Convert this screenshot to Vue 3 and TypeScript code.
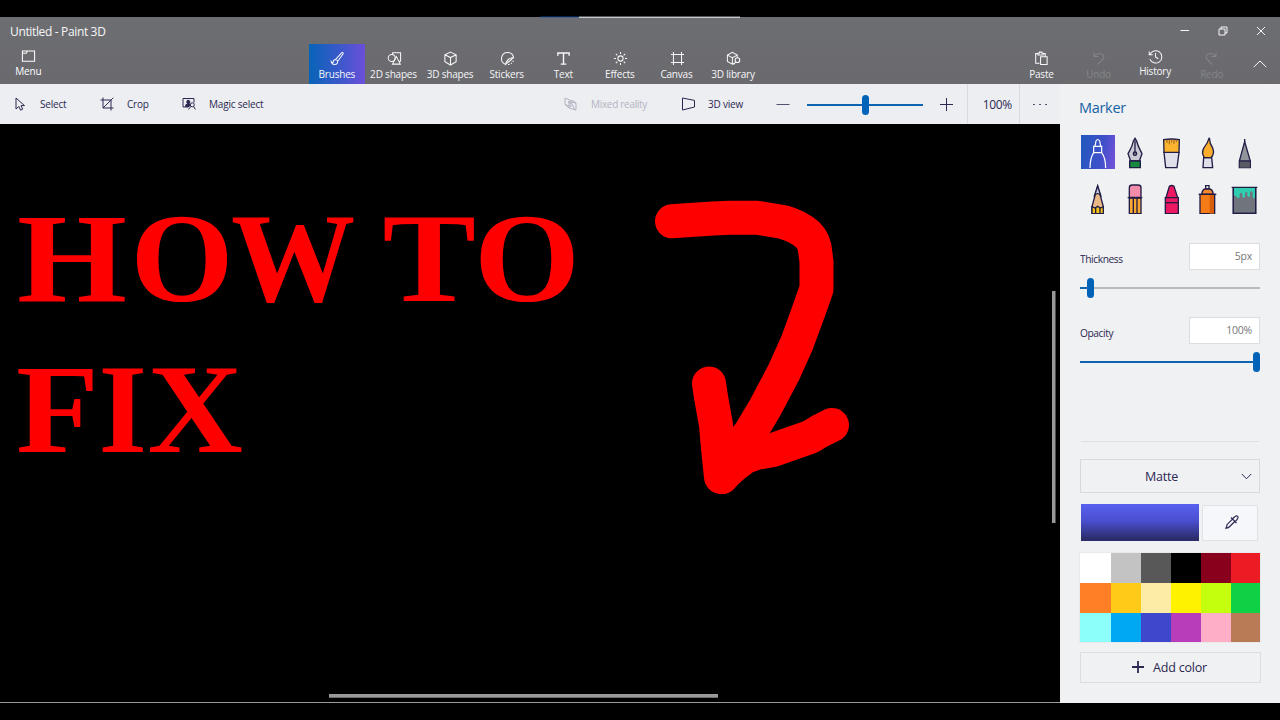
<script setup lang="ts">
interface Tab { id: string; label: string; active?: boolean }

const tabs: Tab[] = [
  { id: 'brushes', label: 'Brushes', active: true },
  { id: 'shapes2d', label: '2D shapes' },
  { id: 'shapes3d', label: '3D shapes' },
  { id: 'stickers', label: 'Stickers' },
  { id: 'text', label: 'Text' },
  { id: 'effects', label: 'Effects' },
  { id: 'canvas', label: 'Canvas' },
  { id: 'library', label: '3D library' },
]

const brushes: string[] = ['marker', 'pen', 'oil', 'water', 'pixel', 'pencil', 'eraser', 'crayon', 'spray', 'fill']

const palette: string[] = [
  '#ffffff', '#c3c3c3', '#585858', '#000000', '#88001b', '#ec1c24',
  '#ff7f27', '#ffca18', '#fdeca6', '#fff200', '#c4ff0e', '#0ed145',
  '#8cfffb', '#00a8f3', '#3f48cc', '#b83dba', '#ffaec8', '#b97a56',
]
</script>

<template>
  <div class="screen">
    <header class="header">
      <div class="progress"><i></i><b></b></div>
      <div class="titlebar">
        <span class="title">Untitled - Paint 3D</span>
        <div class="winbtns">
          <svg viewBox="0 0 10 10"><path d="M0.5 4.5H9" /></svg>
          <svg viewBox="0 0 10 10"><path d="M1 3H7V9H1ZM3 3V1H9V7H7" /></svg>
          <svg viewBox="0 0 10 10"><path d="M1 1L9 9M9 1L1 9" /></svg>
        </div>
      </div>
      <div class="ribbon">
        <div class="rib menu raised">
          <svg viewBox="0 0 16 16"><path d="M1.5 2.2H14.5V13H1.5ZM1.5 4.5H5.6L7 2.2" /></svg>
          <span>Menu</span>
        </div>
        <nav class="tabs">
          <div v-for="t in tabs" :key="t.id" class="rib" :class="{ active: t.active }">
            <svg viewBox="0 0 16 16">
              <path v-if="t.id === 'brushes'" d="M6 9L12.6 1.8Q14.4 1 14 3L8.2 11M6 9Q3.3 9.2 3.3 12Q3 13.2 1.3 11.2Q1.8 14.5 5 14.5Q8.4 14.2 8.2 11Q7.8 9.2 6 9" />
              <g v-else-if="t.id === 'shapes2d'">
                <path d="M6 4.2V1.8H14.5V11H12.6M10 6L14.2 14H5.8Z" /><circle cx="5" cy="7.5" r="3.7" />
              </g>
              <path v-else-if="t.id === 'shapes3d'" d="M8 1.2L14 4V11.5L8 15L2 11.5V4ZM2 4L8 7L14 4M8 7V15" />
              <g v-else-if="t.id === 'stickers'">
                <path d="M6 14.3A6.5 6.5 0 1 1 14.5 7Q7.5 7.5 6 14.3L14.5 7" /><path stroke-dasharray="1.5 1.5" d="M8.5 14.5Q14 13.5 14.5 9M9 12L12.5 9" />
              </g>
              <path v-else-if="t.id === 'text'" stroke-width="1.5" d="M2 5V2.2H14V5M8 2.2V14M5 14H11" />
              <g v-else-if="t.id === 'effects'">
                <circle cx="8" cy="8" r="2.8" /><path d="M8 1V3.2M8 12.8V15M1 8H3.2M12.8 8H15M3 3L4.6 4.6M11.4 11.4L13 13M13 3L11.4 4.6M4.6 11.4L3 13" />
              </g>
              <path v-else-if="t.id === 'canvas'" d="M3.7 1V15M12.3 1V15M1 3.7H15M1 12.3H15" />
              <g v-else>
                <path d="M9 13L6.7 14L1.5 11.2V4.4L6.8 1.5L12 4.4V7M1.5 4.4L6.8 7.2L12 4.4M6.8 7.2V14" /><circle cx="12.2" cy="9.8" r="2.5" /><path d="M10.4 11.6L8 14.5" />
              </g>
            </svg>
            <span>{{ t.label }}</span>
          </div>
        </nav>
        <div class="actions">
          <div class="rib paste">
            <svg viewBox="0 0 16 16"><path d="M6 13H1.8V2.8H4.2M9.8 2.8H12V5.5M4.2 4.3V2.4H5.8V1.2H8.4V2.4H9.8V4.3ZM7 6.2H14V14.5H7Z" /></svg>
            <span>Paste</span>
          </div>
          <div class="rib off">
            <svg viewBox="0 0 16 16"><path d="M3.2 1.5V5.8H8M3.5 5.5Q7.5 1.2 12 3.4Q15 6 12.6 9L7 14.5" /></svg>
            <span>Undo</span>
          </div>
          <div class="rib raised history">
            <svg viewBox="0 0 16 16"><path d="M1.3 2.6V6.2H5M2 6A6.6 6.6 0 1 1 2 10.8M8 4.2V8.4L11 10.4" /></svg>
            <span>History</span>
          </div>
          <div class="rib off">
            <svg viewBox="0 0 16 16"><path d="M12.8 1.5V5.8H8M12.5 5.5Q8.5 1.2 4 3.4Q1 6 3.4 9L9 14.5" /></svg>
            <span>Redo</span>
          </div>
          <svg class="up" viewBox="0 0 14 8"><path d="M0.8 7L7 1L13.2 7" /></svg>
        </div>
      </div>
    </header>

    <main class="main">
      <section class="work">
        <div class="toolbar">
          <svg class="i-cursor" viewBox="0 0 12 14"><path d="M1 1V12L3.8 9.4L5.5 13.2L7.7 12.2L6 8.6H9.5Z" /></svg>
          <span>Select</span>
          <svg class="i-crop" viewBox="0 0 14 14"><path d="M0.5 3H11V13.5M3 0.5V11H13.5M3 11L13.3 0.8" /></svg>
          <span>Crop</span>
          <svg viewBox="0 0 14 14"><path d="M6.5 10H1V1.5H12V5.5" /><path class="solid" d="M3 9.5Q3.3 6.7 5.2 6.6A2 2 0 1 1 7.6 6.4L8.8 8L7 10H3Z" /><circle cx="10.3" cy="7.8" r="2" /><path d="M8.9 9.4L6.4 12.5M11.6 9.4L13.4 12.4" /></svg>
          <span>Magic select</span>
          <svg class="dim" viewBox="0 0 14 14"><path d="M1 1L7 3.6V9.5L1 7.5ZM4 4.5L12 6V13L5 11V4.7M7 3.6Q10.5 3.5 12 6M1 7.5L5 11M4.5 6Q8 5 9 9T12 13" /></svg>
          <span class="dim mixed">Mixed reality</span>
          <svg viewBox="0 0 14 14"><path d="M0.5 1V13L12.5 10V3.4Z" /></svg>
          <span class="view">3D view</span>
          <svg class="thinline" viewBox="0 0 14 14"><path d="M0.5 7.5H13.5" /></svg>
          <div class="slider zoomer"><i class="track" /><b class="thumb" /></div>
          <svg viewBox="0 0 14 14"><path d="M0 7.5H13M6.5 1V14" /></svg>
          <span class="pct">100%</span>
          <span class="more"><i /><i /><i /></span>
        </div>
        <svg class="canvas" viewBox="0 124 1060 578">
          <text class="big" y="301"><tspan x="17" textLength="110" lengthAdjust="spacingAndGlyphs">H</tspan><tspan x="130.5" textLength="103" lengthAdjust="spacingAndGlyphs">O</tspan><tspan x="231" textLength="122" lengthAdjust="spacingAndGlyphs">W</tspan> <tspan x="382.5" textLength="93.5" lengthAdjust="spacingAndGlyphs">T</tspan><tspan x="474" textLength="106" lengthAdjust="spacingAndGlyphs">O</tspan></text>
          <text class="big" y="452"><tspan x="16" textLength="83" lengthAdjust="spacingAndGlyphs">F</tspan><tspan x="98.6" textLength="48.5" lengthAdjust="spacingAndGlyphs">I</tspan><tspan x="147.5" textLength="95.5" lengthAdjust="spacingAndGlyphs">X</tspan></text>
          <g class="arrow">
            <path d="M672 221.3L690 220L713 218.5L730 217.8H757L768 219.5L783 222Q798 226 808 235Q815 242 815.5 254L816.5 262V289L808 313L797 343L784 372L765 408L750 433L738 449L722 477" />
            <path d="M709 383.5L711 397L716 425L718 448L721 477L733 466L745 457L756 453L773 450L790 444L810 437L820 431L832 425" />
          </g>
          <rect class="bar" x="1052" y="291" width="3.5" height="232" />
          <rect class="bar" x="329" y="694" width="389" height="3.7" />
        </svg>
      </section>

      <aside class="panel">
        <h2>Marker</h2>
        <div class="brushes">
          <div v-for="b in brushes" :key="b" class="tile" :class="{ on: b === 'marker' }">
            <svg viewBox="0 0 100 100">
              <g v-if="b === 'marker'" class="white">
                <path d="M42 34L45 18Q50 9 56 18L59 34M38 34H62V53H38ZM27 99C27 76 32 62 38 53H62C69 62 74 76 74 99" />
              </g>
              <g v-else-if="b === 'pen'">
                <path fill="#c8c9d3" d="M46 18L51 10L56 18C60 36 67 45 72 56L64 78H38L30 56C36 45 43 36 46 18Z" /><path d="M51 16V51" /><circle fill="#777986" cx="51" cy="56" r="5" /><path fill="#158b3d" d="M35 78H67V98H35Z" />
              </g>
              <g v-else-if="b === 'oil'">
                <path fill="#dfe0ea" d="M27 52H72L66 98H32Z" /><path fill="#fbb42d" d="M26 14Q49 10 73 14L72 52H27Z" /><path class="thin" d="M36 14V24M43 14V28M50 14V23M57 14V27M64 14V22" />
              </g>
              <g v-else-if="b === 'water'">
                <path fill="#dfe0ea" d="M38 68H62L65 98H36Z" /><path fill="#f9ad2b" d="M55 8Q56 26 65 39Q72 56 60 68H40Q30 53 39 38Q50 25 55 8Z" />
              </g>
              <g v-else-if="b === 'pixel'">
                <path fill="#92949b" d="M50 20L34 78V98H67V78Z" /><path class="no" fill="#585b64" d="M35 80H66V98H35Z" /><path d="M50 12V22M34 78H67" />
              </g>
              <g v-else-if="b === 'pencil'">
                <path fill="#eab887" d="M50 15L33 77V98H67V77Z" /><path fill="#c8c8dc" d="M50 15L41 42Q50 34 59 42Z" /><path fill="#fac31b" d="M33 77L42 81L50 76L58 81L67 77V98H33Z" /><path d="M44 81V98M57 81V98" />
              </g>
              <g v-else-if="b === 'eraser'">
                <path fill="#f18caa" d="M34 49V20Q34 12 43 12H60Q69 12 69 20V49Z" /><path fill="#f8a82e" d="M34 51H69V98H34Z" /><path d="M46 51V98M57 51V98M29 50H73" />
              </g>
              <g v-else-if="b === 'crayon'">
                <path fill="#ec1962" d="M43 16Q50 11 57 16L68 50H33Z" /><path fill="#ec1962" d="M31 50H70V98H31Z" /><path d="M31 65H70" />
              </g>
              <g v-else-if="b === 'spray'">
                <path fill="#fff" d="M44 14H54V24H44Z" /><path fill="#f7892b" d="M32 40Q34 24 44 24H54Q65 24 67 40Z" /><path fill="#f47b16" d="M27 40H71V98H27Z" /><path class="no" fill="#d75f0c" d="M56 42H69V98H56Z" /><path d="M23 40H76" />
              </g>
              <g v-else>
                <path fill="#70747d" d="M16 20H83V97H16Z" /><path class="no" fill="#2fceb1" d="M18 21H81V50Q77 56 74 48V34Q70 27 66 34V46Q61 51 58 44V35Q54 28 51 39V48Q46 54 43 46V39Q38 32 35 39V49Q29 55 27 48L18 43Z" /><path d="M11 19H88M16 19V97H83V19" />
              </g>
            </svg>
          </div>
        </div>
        <div class="field"><label>Thickness</label><output>5px</output></div>
        <div class="slider thick"><i class="track" /><b class="thumb" /></div>
        <div class="field second"><label>Opacity</label><output>100%</output></div>
        <div class="slider opac"><i class="track" /><b class="thumb" /></div>
        <div class="material">
          <span>Matte</span>
          <svg viewBox="0 0 11 7"><path d="M0.8 1L5.5 5.8L10.2 1" /></svg>
        </div>
        <div class="current">
          <div class="swatch"></div>
          <div class="picker">
            <svg viewBox="0 0 14 14"><path d="M7.5 3.8L10.4 1.2Q12.6 0.4 13 2Q13.5 3 11 5.8L10.2 6.5M6 2.5L11.5 8M7.5 4.2L2 9.7Q2 12 0.8 13.2Q3.2 13 4.2 12L9.8 6.5" /></svg>
          </div>
        </div>
        <div class="palette">
          <i v-for="c in palette" :key="c" :style="{ background: c }" />
        </div>
        <div class="add">
          <svg viewBox="0 0 12 12"><path d="M0 6H12M6 0V12" /></svg>
          <span>Add color</span>
        </div>
      </aside>
    </main>
  </div>
</template>

<style>
body { margin: 0; background: #000; }
</style>

<style scoped>
.screen { width: 1280px; height: 720px; box-sizing: border-box; padding-top: 17px; background: #000; overflow: hidden; font-family: "Open Sans", "Noto Sans", sans-serif; color: #2b2852; }
svg { display: block; fill: none; stroke: currentColor; stroke-width: 1; }
.header { height: 67px; position: relative; background: linear-gradient(#6d6e72, #69696e); color: #f7f7f9; }
.progress { position: absolute; left: 540px; top: -1px; display: flex; height: 2px; }
.progress i { width: 39px; background: linear-gradient(#0b2342 50%, #465f8d 50%); }
.progress b { width: 161px; height: 2px; background: linear-gradient(#55565a 50%, #c9c9cb 50%); }
.titlebar { height: 27px; display: flex; justify-content: space-between; }
.title { padding-left: 10px; font-size: 12px; line-height: 29px; letter-spacing: -0.35px; }
.winbtns { display: flex; gap: 28px; padding: 8.5px 14.5px 0 0; }
.winbtns svg { width: 10px; height: 10px; }
.ribbon { display: flex; height: 40px; position: relative; }
.rib { width: 56.6px; height: 40px; display: flex; flex-direction: column; align-items: center; font-size: 10px; letter-spacing: -0.2px; white-space: nowrap; }
.rib svg { width: 15px; height: 15px; margin-top: 6.5px; stroke-width: 1.1; }
.tabs .rib svg { margin-left: 1.4px; }
.rib span { line-height: 14px; margin-top: 1px; }
.rib.raised svg { margin-top: 4.5px; }
.rib.raised span { margin-top: 0.5px; }
.rib.menu { color: #fff; }
.rib.paste span { margin-left: -1px; }
.rib.active { background: linear-gradient(90deg, #0764b7, #3b59ca 55%, #6b4fda); }
.off { color: #85868a; }
.tabs { display: flex; margin-left: 252px; }
.actions { display: flex; margin-left: auto; margin-right: 13px; }
.up { width: 14px; height: 8px; margin: 16px 0 0 13px; }
.main { display: flex; height: 619px; }
.work { width: 1060px; display: flex; flex-direction: column; border-bottom: 1px solid #9a9a9a; box-sizing: border-box; }
.toolbar { height: 40px; display: grid; grid-template-columns: 25px 61px 26px 55px 27px 355px 27px 91px 26px 68px 31px 133px 27px 52px 41px; padding-left: 15px; box-sizing: border-box; align-items: center; background: #edeef1; font-size: 10px; letter-spacing: -0.2px; }
.toolbar svg { width: 14px; height: 14px; }
.toolbar .i-cursor { width: 12px; height: 14px; }
.toolbar .i-crop { margin-left: -1px; }
.toolbar .thinline { stroke-width: 0.8; }
.toolbar .dim { color: #b3b4c3; }
.toolbar .mixed { letter-spacing: -0.3px; }
.solid { fill: currentColor; stroke: none; }
.toolbar .pct { border-left: 1px solid #d9dade; border-right: 1px solid #d9dade; height: 40px; line-height: 41px; font-size: 12px; text-align: right; padding-right: 7px; box-sizing: border-box; width: 53px; letter-spacing: -0.3px; }
.more { display: flex; gap: 4px; padding: 1px 0 0 14px; }
.more i { width: 2px; height: 1.5px; background: #55536f; }
.slider { position: relative; height: 20px; display: flex; align-items: center; }
.track { flex: 1; height: 2px; background: #0f64af; }
.thumb { position: absolute; top: 0; width: 7px; height: 20px; border-radius: 3.5px; background: #0063b8; }
.zoomer { width: 116px; margin-top: 2px; }
.zoomer .thumb { left: 55px; }
.canvas { width: 1060px; height: 578px; background: #000; }
.big { font: bold 127px "Liberation Serif", serif; fill: #f00; stroke: none; }
.arrow { stroke: #f00; stroke-width: 34; stroke-linecap: round; stroke-linejoin: round; }
.bar { fill: #999; stroke: none; }
.panel { width: 220px; padding: 0 20px; box-sizing: border-box; background: #f0f1f3; }
h2 { margin: 0; padding-top: 11px; height: 40px; font-size: 14.5px; line-height: 25px; font-weight: 400; letter-spacing: -0.3px; color: #1762a5; margin-left: -1px; }
.brushes { display: grid; grid-template-columns: repeat(5, 36.67px); grid-auto-rows: 45.5px; margin: 0.4px 0 0 1.3px; height: 107.6px; }
.tile { width: 33.33px; height: 33.33px; }
.tile.on { background: linear-gradient(100deg, #2158bd, #3f50ca 60%, #7552d8); }
.tile svg { width: 33.33px; height: 33.33px; stroke: #211d47; stroke-width: 4; }
.tile .white { stroke: #fff; stroke-width: 3.6; }
.thin { stroke: #8a5a28; stroke-width: 2.5; }
.no { stroke: none; }
.field { display: flex; justify-content: space-between; font-size: 10.5px; height: 27px; letter-spacing: -0.25px; }
.field label { font-size: 10.2px; line-height: 32px; letter-spacing: -0.4px; }
.field output { width: 71px; height: 27px; box-sizing: border-box; border: 1px solid #dcdde0; background: #fff; color: #777; text-align: right; padding-right: 7px; line-height: 25px; }
.thick { margin-top: 8px; }
.thick .track { background: linear-gradient(90deg, #0f64af 10px, #b9babe 10px); }
.thick .thumb { left: 7px; }
.field.second { margin-top: 19px; }
.opac { margin-top: 8px; }
.opac .thumb { right: 0; }
.material { position: relative; margin-top: 87px; height: 34px; box-sizing: border-box; border: 1px solid #d8d9dd; display: flex; align-items: center; font-size: 12.5px; letter-spacing: -0.2px; }
.material::before { content: ""; position: absolute; left: 0; right: 0; top: -19px; border-top: 1px solid #dfe0e3; }
.material span { padding: 1px 0 0 64px; }
.material svg { width: 11px; height: 7px; margin: 1px 7px 0 auto; }
.current { display: flex; gap: 3px; padding: 11px 0 0 1px; height: 38px; }
.swatch { width: 118px; height: 37px; background: linear-gradient(#5860ef, #4a4fd0 45%, #2b2c69 95%); }
.picker { width: 56px; height: 36px; margin-top: 1px; box-sizing: border-box; border: 1px solid #e1e2e6; background: #f6f7fa; display: flex; align-items: center; justify-content: center; }
.picker svg { width: 14px; height: 14px; margin: -2px 0 0 4px; stroke-width: 1.2; }
.palette { display: grid; grid-template-columns: 31px repeat(4, 30px) 29px; grid-template-rows: 30px 30px 29px; margin-top: 11px; box-shadow: 0 0 0 0.5px #dfe0e3; }
.add { margin-top: 10px; width: 181px; height: 31px; box-sizing: border-box; border: 1px solid #dcdde1; display: flex; align-items: center; gap: 9px; padding-left: 51px; font-size: 12.5px; letter-spacing: -0.2px; }
.add svg { width: 12px; height: 12px; stroke-width: 1.8; }
</style>
